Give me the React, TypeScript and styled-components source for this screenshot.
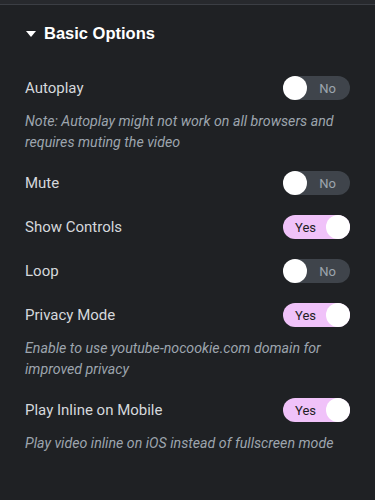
import React from "react";
import styled, { createGlobalStyle } from "styled-components";

const Global = createGlobalStyle`
  html, body { margin: 0; padding: 0; background: #1f2124; }
  body { font-family: Roboto, "Liberation Sans", sans-serif; }
`;

const Panel = styled.div`
  width: 375px;
  height: 500px;
  background: #1f2124;
  overflow: hidden;
`;

const TopStrip = styled.div`
  height: 4px;
  background: #27292d;
  border-bottom: 1px solid #3b3e44;
`;

const Section = styled.div`
  padding: 18px 25px 0 25px;
`;

const Title = styled.div`
  display: flex;
  align-items: center;
  gap: 8px;
  height: 20px;
  font-family: "Liberation Sans", Arial, sans-serif;
  font-weight: 700;
  font-size: 16.5px;
  color: #ffffff;
  margin-left: 1px;
`;

const Caret = styled.span`
  width: 0;
  height: 0;
  border-left: 5px solid transparent;
  border-right: 5px solid transparent;
  border-top: 6px solid #ffffff;
  margin-top: 1px;
`;

const List = styled.div`
  margin-top: 33px;
  display: flex;
  flex-direction: column;
  gap: 20px;
`;

const Control = styled.div``;

const Row = styled.div`
  display: flex;
  align-items: center;
  justify-content: space-between;
  height: 24px;
`;

const Label = styled.span`
  font-size: 15px;
  color: #d5d8dc;
`;

const Desc = styled.div`
  margin: 11px 0 -2px;
  font-size: 14.2px;
  line-height: 21px;
  font-style: italic;
  color: #9da5ae;
`;

const Track = styled.div<{ $on: boolean }>`
  width: 67px;
  height: 24px;
  border-radius: 12px;
  margin-right: 0;
  background: ${(p) => (p.$on ? "#f0c2f9" : "#3f444b")};
  display: flex;
  flex-direction: ${(p) => (p.$on ? "row" : "row-reverse")};
  align-items: center;
  justify-content: space-between;
  font-size: 13px;
  color: ${(p) => (p.$on ? "#1f2124" : "#9da5ae")};
`;

const ToggleText = styled.span<{ $on: boolean }>`
  flex: 1;
  text-align: center;
  padding-left: ${(p) => (p.$on ? "2px" : "0")};
  padding-right: ${(p) => (p.$on ? "0" : "2px")};
`;

const Knob = styled.span`
  width: 24px;
  height: 24px;
  border-radius: 50%;
  background: #ffffff;
  flex: none;
`;

const Toggle = ({ on }: { on: boolean }) => (
  <Track $on={on}>
    <ToggleText $on={on}>{on ? "Yes" : "No"}</ToggleText>
    <Knob />
  </Track>
);

const items: { label: string; on: boolean; desc?: string }[] = [
  {
    label: "Autoplay",
    on: false,
    desc: "Note: Autoplay might not work on all browsers and requires muting the video",
  },
  { label: "Mute", on: false },
  { label: "Show Controls", on: true },
  { label: "Loop", on: false },
  {
    label: "Privacy Mode",
    on: true,
    desc: "Enable to use youtube-nocookie.com domain for improved privacy",
  },
  {
    label: "Play Inline on Mobile",
    on: true,
    desc: "Play video inline on iOS instead of fullscreen mode",
  },
];

export default function App() {
  return (
    <>
      <Global />
      <Panel>
        <TopStrip />
        <Section>
          <Title>
            <Caret />
            Basic Options
          </Title>
          <List>
            {items.map((it) => (
              <Control key={it.label}>
                <Row>
                  <Label>{it.label}</Label>
                  <Toggle on={it.on} />
                </Row>
                {it.desc && <Desc>{it.desc}</Desc>}
              </Control>
            ))}
          </List>
        </Section>
      </Panel>
    </>
  );
}
